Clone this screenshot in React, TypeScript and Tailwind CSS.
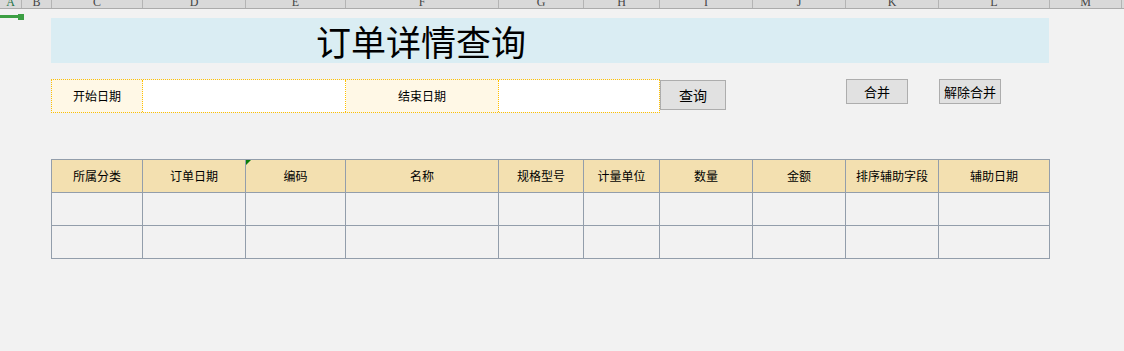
import React from 'react';

const COLS = [
  { key: 'A', w: 'w-[22px]' },
  { key: 'B', w: 'w-[30px]' },
  { key: 'C', w: 'w-[91px]' },
  { key: 'D', w: 'w-[103px]' },
  { key: 'E', w: 'w-[100px]' },
  { key: 'F', w: 'w-[153px]' },
  { key: 'G', w: 'w-[85px]' },
  { key: 'H', w: 'w-[76px]' },
  { key: 'I', w: 'w-[93px]' },
  { key: 'J', w: 'w-[93px]' },
  { key: 'K', w: 'w-[93px]' },
  { key: 'L', w: 'w-[111px]' },
  { key: 'M', w: 'w-[72px]' },
];

const HEADERS = ['所属分类', '订单日期', '编码', '名称', '规格型号', '计量单位', '数量', '金额', '排序辅助字段', '辅助日期'];

const cjk = "font-['Noto_Sans_CJK_SC','Noto_Sans',sans-serif]";

const ColumnBar: React.FC = () => (
  <div className="flex h-[9px] overflow-hidden border-b border-[#ababab] bg-[#d9d9d9]">
    {COLS.map(c => (
      <div
        key={c.key}
        className={`${c.w} shrink-0 flex items-end justify-center border-r border-[#b4b4b4] ${c.key === 'A' ? 'text-[#217346]' : 'text-[#444]'}`}
      >
        <span className="block text-[12px] leading-[12px] font-['Liberation_Serif',serif]">{c.key}</span>
      </div>
    ))}
    <div className="flex-1" />
  </div>
);

const Btn: React.FC<{ label: string; className: string }> = ({ label, className }) => (
  <button className={`shrink-0 flex items-center justify-center bg-[#e1e1e1] border border-[#adadad] text-black ${cjk} ${className}`}>
    {label}
  </button>
);

export default function App() {
  return (
    <div className={`relative min-h-screen bg-[#f2f2f2] ${cjk}`}>
      <ColumnBar />

      {/* A1 selection */}
      <div className="absolute left-0 top-[15px] w-[18px] h-[3px] bg-[#3c9f43]" />
      <div className="absolute left-[18px] top-[14px] w-[6px] h-[6px] bg-[#3c9f43]" />

      <div className="pl-[51px]">
        <div className="mt-[9px] w-[998px] h-[45px] bg-[#daedf3] flex items-center pl-[265px]">
          <span className="text-[35px] leading-none text-black">订单详情查询</span>
        </div>

        <div className="mt-[16px] flex items-start">
          <div className="flex h-[34px] border border-dotted border-[#ffc000] text-[12px] text-black">
            <div className="w-[91px] flex items-center justify-center bg-[#fff8e6] border-r border-dotted border-[#ffc000]">开始日期</div>
            <div className="w-[203px] bg-white border-r border-dotted border-[#ffc000]" />
            <div className="w-[153px] flex items-center justify-center bg-[#fff8e6] border-r border-dotted border-[#ffc000]">结束日期</div>
            <div className="w-[160px] bg-white" />
          </div>
          <Btn label="查询" className="mt-px w-[66px] h-[30px] text-[14px]" />
          <Btn label="合并" className="ml-[120px] w-[62px] h-[25px] text-[13px]" />
          <Btn label="解除合并" className="ml-[31px] w-[62px] h-[25px] text-[13px]" />
        </div>

        <div className="mt-[46px] w-fit grid grid-cols-[91px_103px_100px_153px_85px_76px_93px_93px_93px_111px] border-l border-t border-[#939eab] text-[12px] text-black">
          {HEADERS.map((h, i) => (
            <div key={h} className="relative h-[33px] flex items-center justify-center bg-[#f3e0b0] border-r border-b border-[#939eab]">
              {i === 2 && (
                <span className="absolute left-0 top-0 w-0 h-0 border-t-[5px] border-r-[5px] border-t-[#0a7d0a] border-r-transparent" />
              )}
              {h}
            </div>
          ))}
          {Array.from({ length: 20 }).map((_, i) => (
            <div key={i} className="h-[33px] border-r border-b border-[#939eab]" />
          ))}
        </div>
      </div>
    </div>
  );
}
